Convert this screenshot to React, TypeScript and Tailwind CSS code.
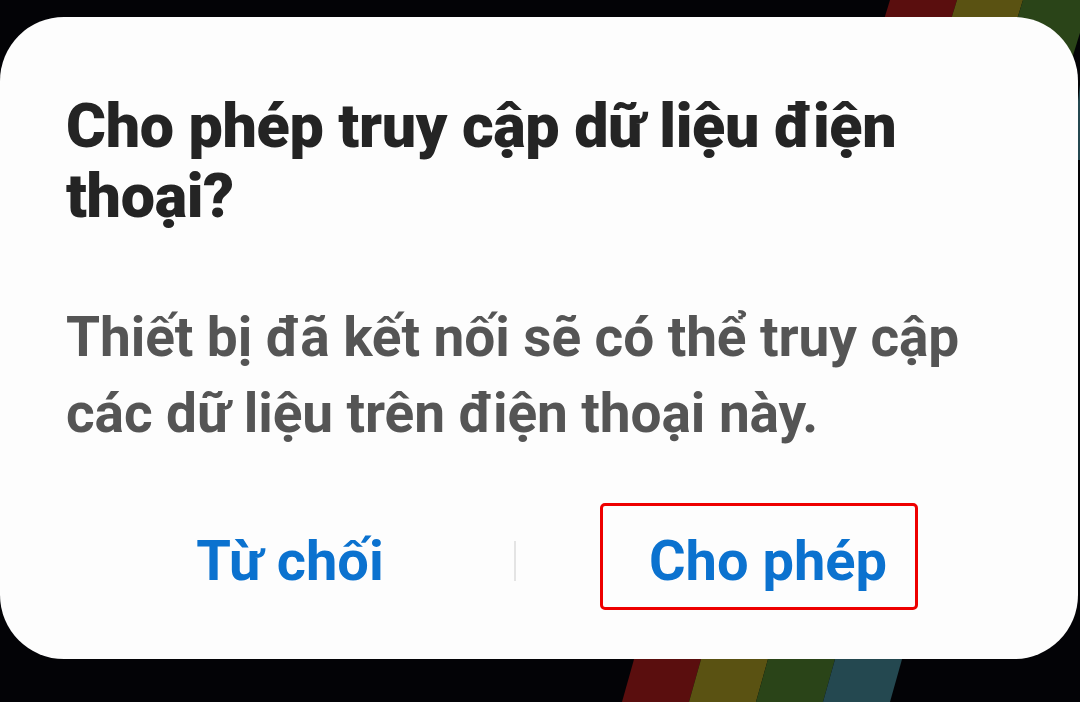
import React from 'react';

const Stripes: React.FC = () => (
  <svg className="absolute inset-0 h-full w-full" viewBox="0 0 1080 702" preserveAspectRatio="none">
    {/* top-right band */}
    <polygon points="890,0 957,0 938,62 871,62" fill="#5a0e0e" />
    <polygon points="957,0 1023,0 1004,62 938,62" fill="#5a5212" />
    <polygon points="1023,0 1090,0 1071,62 1004,62" fill="#2a4418" />
    <polygon points="1090,0 1157,0 1138,160 1071,160" fill="#244850" />
    {/* bottom band */}
    <polygon points="645,620 712,620 689,702 622,702" fill="#5a0e0e" />
    <polygon points="712,620 779,620 756,702 689,702" fill="#5a5212" />
    <polygon points="779,620 846,620 823,702 756,702" fill="#2a4418" />
    <polygon points="846,620 913,620 890,702 823,702" fill="#244850" />
  </svg>
);

export default function App() {
  return (
    <div className="relative h-[702px] w-[1080px] overflow-hidden bg-[#030306] pt-[17px] font-['Roboto',sans-serif]">
      <Stripes />
      <div className="relative h-[642px] w-[1078px] rounded-[64px] bg-[#fdfdfd] pl-[66px] pt-[74px]">
        <h1 className="text-[61px] font-black leading-[70px] tracking-[-0.35px] text-[#242424]">
          Cho phép truy cập dữ liệu điện
          <br />
          thoại?
        </h1>

        <p className="mt-[68px] text-[55px] font-bold leading-[76px] tracking-[-0.1px] text-[#555555]">
          Thiết bị đã kết nối sẽ có thể truy cập
          <br />
          các dữ liệu trên điện thoại này.
        </p>

        <div className="relative mt-[56px] flex h-[107px] items-center">
          <button className="w-[448px] text-center text-[56px] font-bold text-[#0b72cf]">Từ chối</button>
          <div className="h-[40px] w-[2px] bg-[#e4e4e4]" />
          <button className="w-[504px] text-center text-[56px] font-bold text-[#0b72cf]">Cho phép</button>
          <div className="pointer-events-none absolute left-[534px] top-[-4px] h-[107px] w-[318px] rounded-[5px] border-[3px] border-[#ee0000]" />
        </div>
      </div>
    </div>
  );
}
